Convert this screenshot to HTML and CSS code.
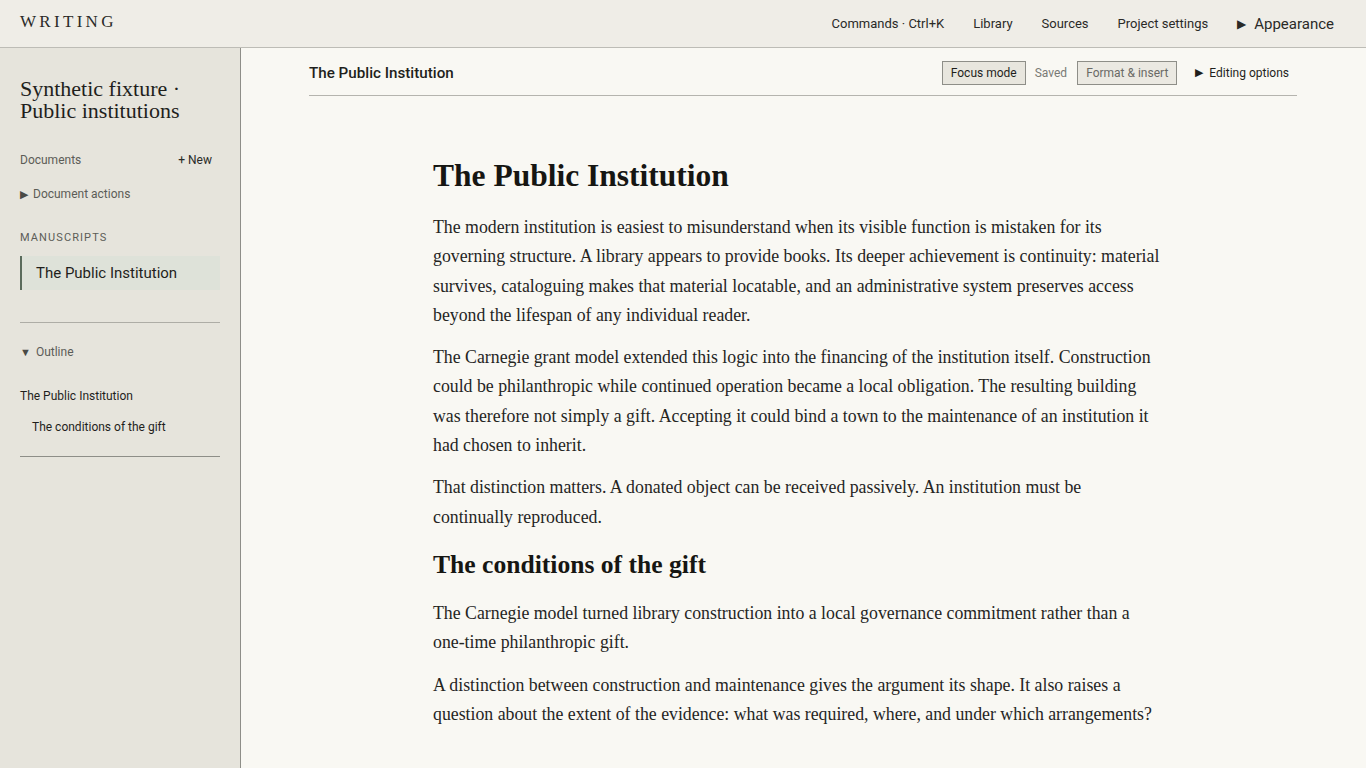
FILE: index.html
```html
<!DOCTYPE html>
<html lang="en">
<head>
<meta charset="utf-8">
<title>Writing</title>
<link rel="stylesheet" href="styles.css">
</head>
<body>
<header class="topbar">
  <div class="brand">WRITING</div>
  <nav class="topnav">
    <a class="navlink">Commands · Ctrl+K</a>
    <a class="navlink">Library</a>
    <a class="navlink">Sources</a>
    <a class="navlink">Project settings</a>
    <a class="navlink appearance"><span class="tri">&#9654;</span>Appearance</a>
  </nav>
</header>
<div class="layout">
  <aside class="sidebar">
    <h2 class="project">Synthetic fixture · Public institutions</h2>
    <div class="docs-row">
      <span class="muted">Documents</span>
      <span class="newbtn">+ New</span>
    </div>
    <div class="disclosure"><span class="tri-s">&#9654;</span>Document actions</div>
    <div class="section-label">MANUSCRIPTS</div>
    <div class="ms-item">The Public Institution</div>
    <hr class="rule">
    <div class="disclosure outline"><span class="tri-s">&#9660;</span>Outline</div>
    <ul class="outline-list">
      <li class="o1">The Public Institution</li>
      <li class="o2">The conditions of the gift</li>
    </ul>
    <hr class="rule rule-end">
  </aside>
  <main class="main">
    <div class="doc-header">
      <div class="doc-title">The Public Institution</div>
      <div class="doc-tools">
        <button class="btn">Focus mode</button>
        <span class="saved">Saved</span>
        <button class="btn btn-dim">Format &amp; insert</button>
        <span class="editing"><span class="tri-s dark">&#9654;</span>Editing options</span>
      </div>
    </div>
    <article class="article">
      <h1>The Public Institution</h1>
      <p>The modern institution is easiest to misunderstand when its visible function is mistaken for its governing structure. A library appears to provide books. Its deeper achievement is continuity: material survives, cataloguing makes that material locatable, and an administrative system preserves access beyond the lifespan of any individual reader.</p>
      <p>The Carnegie grant model extended this logic into the financing of the institution itself. Construction could be philanthropic while continued operation became a local obligation. The resulting building was therefore not simply a gift. Accepting it could bind a town to the maintenance of an institution it had chosen to inherit.</p>
      <p>That distinction matters. A donated object can be received passively. An institution must be continually reproduced.</p>
      <h2>The conditions of the gift</h2>
      <p>The Carnegie model turned library construction into a local governance commitment rather than a one-time philanthropic gift.</p>
      <p>A distinction between construction and maintenance gives the argument its shape. It also raises a question about the extent of the evidence: what was required, where, and under which arrangements?</p>
    </article>
  </main>
</div>
</body>
</html>
```
FILE: styles.css
```css
* { box-sizing: border-box; }
html, body { margin: 0; padding: 0; }
body {
  width: 1366px;
  height: 768px;
  overflow: hidden;
  font-family: Roboto, "Liberation Sans", sans-serif;
  color: #1f1f1c;
  background: #f9f8f3;
}
.topbar {
  height: 48px;
  background: #efede7;
  border-bottom: 1px solid #bdbcb6;
  display: flex;
  align-items: center;
  justify-content: space-between;
  padding: 0 32px 0 20px;
}
.brand {
  font-family: "Liberation Serif", serif;
  font-size: 17px;
  letter-spacing: 3.3px;
  color: #2a2a27;
  margin-top: -3px;
}
.topnav { display: flex; align-items: center; gap: 29px; }
.navlink { font-size: 13px; color: #2a2a27; }
.appearance { font-size: 15px; display: flex; align-items: center; }
.tri { font-size: 12px; margin-right: 8px; }
.layout {
  display: grid;
  grid-template-columns: 241px 1fr;
  height: 720px;
}
.sidebar {
  background: #e6e4dc;
  border-right: 1px solid #8e8e88;
  padding: 30px 20px 0 20px;
}
.project {
  font-family: "Liberation Serif", serif;
  font-weight: normal;
  font-size: 22px;
  line-height: 22px;
  margin: 0 0 31px 0;
  color: #1f1f1c;
}
.docs-row {
  display: flex;
  justify-content: space-between;
  font-size: 12px;
  padding-right: 8px;
  margin-bottom: 20px;
}
.muted { color: #5c5c57; }
.newbtn { color: #2a2a27; }
.disclosure {
  font-size: 12px;
  color: #5c5c57;
  display: flex;
  align-items: center;
}
.tri-s { font-size: 11px; margin-right: 5px; color: #4a4a46; }
.tri-s.dark { color: #1f1f1c; margin-right: 6px; }
.section-label {
  font-size: 11px;
  letter-spacing: 1.1px;
  color: #5c5c57;
  margin-top: 30px;
  margin-bottom: 12px;
}
.ms-item {
  background: #dee2d9;
  border-left: 2px solid #5a6b5c;
  padding: 8px 14px;
  font-size: 15px;
  line-height: 18px;
  color: #1f1f1c;
}
.rule {
  border: 0;
  border-top: 1px solid #aeada6;
  margin: 32px 0 22px 0;
}
.outline { margin-bottom: 30px; }
.outline-list {
  list-style: none;
  margin: 0;
  padding: 0;
  font-size: 12px;
  color: #1f1f1c;
}
.o1 { margin-bottom: 17px; }
.o2 { padding-left: 12px; }
.rule.rule-end { margin-top: 22px; border-top-color: #8e8e88; }
.main { padding: 0 69px 0 68px; overflow: hidden; }
.doc-header {
  height: 48px;
  border-bottom: 1px solid #b5b4ae;
  display: flex;
  align-items: center;
  justify-content: space-between;
}
.doc-title { font-size: 15.2px; font-weight: 500; color: #1f1f1c; padding-top: 2px; }
.doc-tools { display: flex; align-items: center; padding-right: 8px; padding-top: 2px; }
.btn {
  font-family: Roboto, "Liberation Sans", sans-serif;
  font-size: 12px;
  background: #e8e6de;
  border: 1px solid #8e8e88;
  color: #1f1f1c;
  height: 24px;
  padding: 0 8px;
  border-radius: 0;
}
.btn-dim { color: #6a6a66; background: #ebe9e2; }
.saved { font-size: 12px; color: #7a7a75; margin: 0 10px 0 9px; }
.editing { font-size: 12px; color: #1f1f1c; margin-left: 18px; display: flex; align-items: center; }
.article {
  max-width: 740px;
  margin: 0 auto;
  padding: 62px 11px 0 0;
  font-family: "Liberation Serif", serif;
  color: #25251f;
}
.article h1 {
  font-size: 31.5px;
  line-height: 36px;
  margin: 0 0 19px 0;
  color: #161612;
}
.article h2 {
  font-size: 25.6px;
  line-height: 29px;
  margin: 18px 0 20px 0;
  color: #161612;
}
.article p {
  font-size: 17.8px;
  line-height: 29.3px;
  margin: 0 0 13px 0;
}
```
